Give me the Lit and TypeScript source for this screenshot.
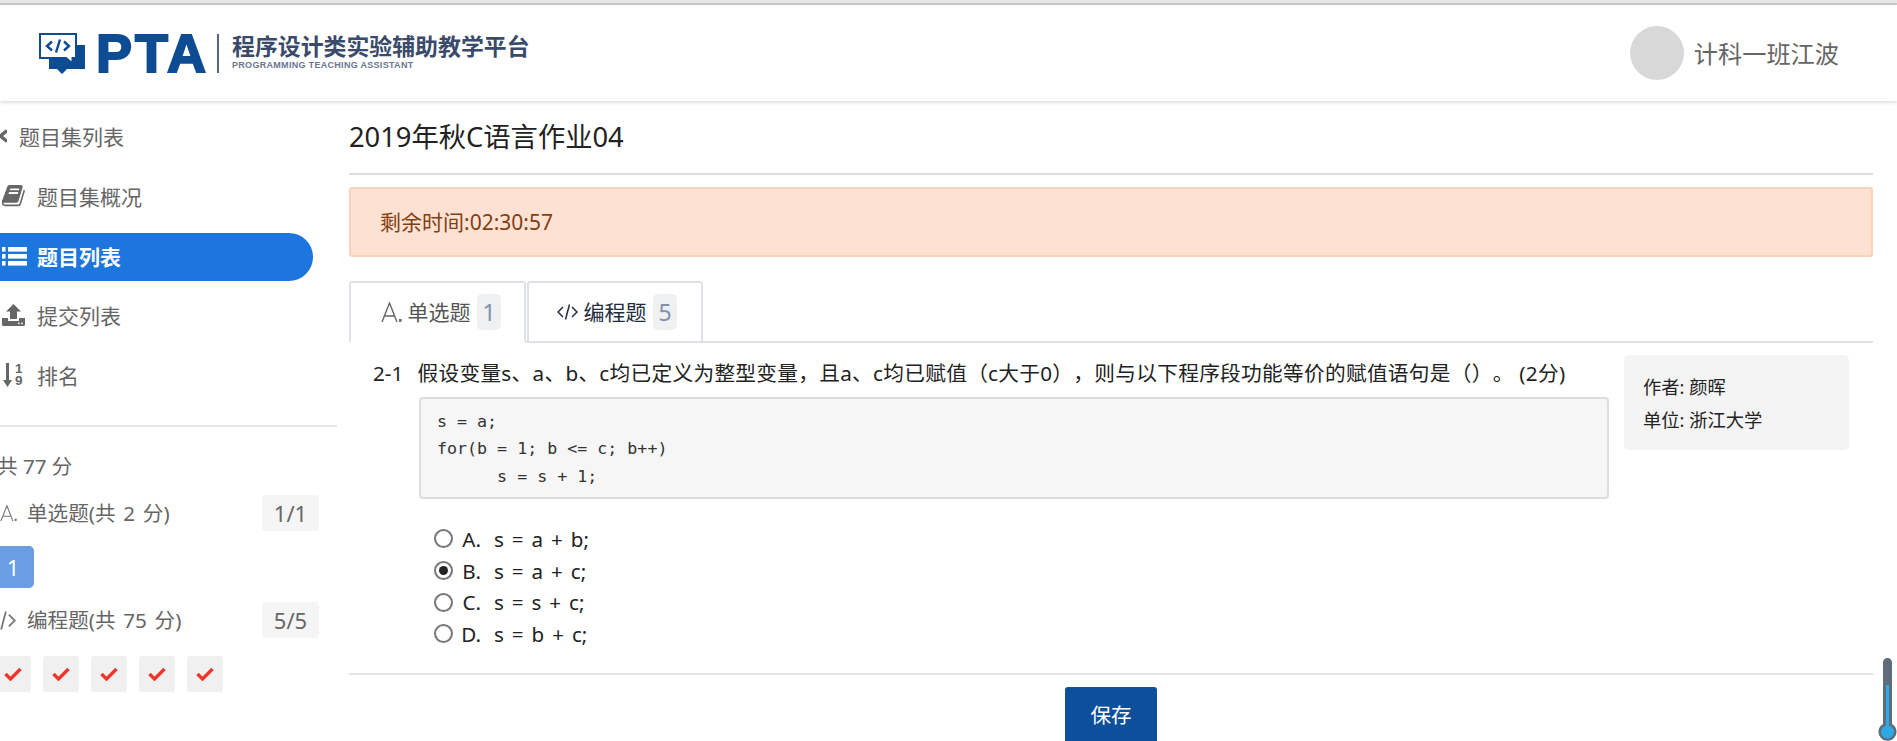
import { LitElement, html, css, svg } from "lit";
import { customElement } from "lit/decorators.js";

const bookPath = "M1703 478q40 57 18 129l-275 906q-19 64-76.5 107.5t-122.5 43.5h-923q-77 0-148.5-53.5t-99.5-131.5q-24-67-2-127 0-4 3-27t4-37q1-8-3-21.5t-3-19.5q2-11 8-21t16.5-23.5 16.5-23.5q23-38 45-91.5t30-91.5q3-10 .5-30t-.5-28q3-11 17-28t17-23q21-36 42-92t25-90q1-9-2.5-32t.5-28q4-13 22-30.5t22-22.5q19-26 42.5-84.5t27.5-96.5q1-8-3-25.5t-2-26.5q2-8 9-18t18-23 17-21q8-12 16.5-30.5t15-35 16-36 19.5-32 26.5-23.5 36-11.5 47.5 5.5l-1 3q38-9 51-9h761q74 0 114 56t18 130l-274 906q-36 119-71.5 153.5t-128.5 34.5h-869q-27 0-38 15-11 16-1 43 24 70 144 70h923q29 0 56-15.5t35-41.5l300-987q7-22 5-57 38 15 59 43zm-1064 2q-4 13 2 22.5t20 9.5h608q13 0 25.5-9.5t16.5-22.5l21-64q4-13-2-22.5t-20-9.5h-608q-13 0-25.5 9.5t-16.5 22.5zm-83 256q-4 13 2 22.5t20 9.5h608q13 0 25.5-9.5t16.5-22.5l21-64q4-13-2-22.5t-20-9.5h-608q-13 0-25.5 9.5t-16.5 22.5z";

const iconA = (c: string) => html`<svg width="21" height="20" viewBox="0 0 21 20"><path d="M1 20 L8.5 1 L16 20 M3.6 14 H13.4" fill="none" stroke=${c} stroke-width="1.4"/><rect x="18" y="17" width="2.6" height="2.8" fill=${c}/></svg>`;
const iconCode = (c: string) => html`<svg width="21" height="16" viewBox="0 0 21 16"><path d="M6 3 L1 8 L6 13 M15 3 L20 8 L15 13 M12.5 0.5 L8.5 15.5" fill="none" stroke=${c} stroke-width="1.5"/></svg>`;
const check = html`<svg width="18" height="14" viewBox="0 0 18 14"><path d="M1.5 7 L6.5 12 L16.5 2" fill="none" stroke="#f5332d" stroke-width="3.4"/></svg>`;

@customElement("app-root")
export class AppRoot extends LitElement {
  static styles = css`
    :host { display: block; width: 1897px; height: 741px; overflow: hidden; position: relative; background: #fff;
      font-family: "Noto Sans", "Noto Sans CJK SC", sans-serif; font-size: 20.6px; color: #222; text-spacing-trim: space-all; }
    .topband { height: 3px; background: #e8e8e8; border-bottom: 2px solid #ccc; }
    header { height: 96px; display: flex; align-items: center; justify-content: space-between; box-sizing: border-box;
      padding: 0 58px 0 39px; box-shadow: 0 1px 4px rgba(0,0,0,.18); position: relative; }
    .logo { display: flex; align-items: center; }
    .pta { font-family: "Liberation Sans", sans-serif; font-weight: 700; font-size: 54px; line-height: 40px; color: #0d4b92;
      margin-left: 11px; letter-spacing: 3px; -webkit-text-stroke: 2px #0d4b92; }
    .sep { width: 2px; height: 39px; background: #56657f; margin: 0 13px 0 8px; }
    .slogan { display: flex; flex-direction: column; margin-top: -2px; }
    .cn { font-size: 22.9px; font-weight: 700; line-height: 26px; color: #3a4a6b; white-space: nowrap; }
    .en { font-family: "Liberation Sans", sans-serif; font-size: 9px; font-weight: 700; line-height: 11px; color: #6a7690; letter-spacing: .3px; white-space: nowrap; }
    .user { display: flex; align-items: center; gap: 10px; color: #666; font-size: 24.2px; }
    .user .nm { padding-bottom: 2px; }
    .avatar { width: 54px; height: 54px; border-radius: 50%; background: #d8d8d8; }
    .body { display: flex; }
    aside { width: 337px; flex: none; overflow: hidden; padding-top: 12px; color: #666; }
    nav { display: flex; flex-direction: column; gap: 11.75px; }
    .item { height: 48px; box-sizing: border-box; padding-bottom: 2px; display: flex; align-items: center; font-size: 21px; }
    .item .ic { width: 37px; flex: none; display: flex; padding-left: 2px; box-sizing: border-box; }
    .item.back .ic { width: 19px; padding-left: 0; margin-left: -1px; margin-right: 1px; }
    .item.active { width: 313px; background: #1d75de; color: #fff; font-weight: 700; border-radius: 0 24px 24px 0; padding-bottom: 1px; }
    .sort { display: flex; gap: 3px; align-items: center; padding-left: 1px; }
    .digits { font-family: "Liberation Sans", sans-serif; font-size: 13.5px; font-weight: 700; display: flex; flex-direction: column; }
    .digits span { display: block; height: 12.5px; line-height: 12.5px; }
    .div1 { height: 2px; background: #e6e6e6; margin-top: 25px; }
    .total { margin: 24px 0 0 -3px; line-height: 30px; white-space: nowrap; }
    .grp { display: flex; align-items: center; height: 36px; margin-top: 14px; padding-right: 18px; }
    .grp .gi { width: 27px; flex: none; display: flex; overflow: hidden; justify-content: flex-end; padding-right: 10px; box-sizing: border-box; }
    .grp .gi.cd { padding-right: 11px; }
    .grp .gi.cd svg { width: 25px; height: 19px; flex: none; }
    .grp .lbl { flex: 1; white-space: nowrap; word-spacing: 2.4px; padding-bottom: 3px; }
    .count { width: 57px; height: 36px; background: #f5f5f5; border-radius: 3px; display: flex; align-items: center; justify-content: center; font-size: 22px; padding-bottom: 1px; box-sizing: border-box; }
    .one { width: 42px; height: 42px; margin: 15px 0 0 -8px; background: #699ee3; border-radius: 5px; color: #fff; display: flex; align-items: center; justify-content: center; font-size: 22px; }
    .checks { display: flex; gap: 12px; margin: 18px 0 0 -5px; }
    .chk { width: 36px; height: 36px; background: #f0f0f0; border-radius: 3px; display: flex; align-items: center; justify-content: center; }
    main { width: 1524px; flex: none; margin-left: 12px; padding-top: 13px; position: relative; }
    h1 { margin: 0; height: 48px; line-height: 46px; font-size: 27.3px; font-weight: 400; color: #222; white-space: nowrap; }
    .div2 { height: 2px; background: #ddd; margin-top: 11px; }
    .alert { height: 70px; margin-top: 12px; box-sizing: border-box; background: #fde2d3; border: 2px solid #fbd3bd; border-radius: 3px;
      display: flex; align-items: center; padding: 0 0 3px 29px; color: #843e12; font-size: 21px; }
    .tabs { display: flex; height: 60px; margin-top: 24px; border-bottom: 2px solid #dee2e6; gap: 1px; }
    .tab { box-sizing: border-box; width: 176px; height: 62px; border: 2px solid #dee2e6; border-radius: 3px 3px 0 0; display: flex; align-items: center; padding-left: 27.5px; color: #1f2d3d; background: #fff; }
    .tab.cur { border-bottom-color: #fff; color: #555; width: 177px; padding-left: 29.5px; }
    .tab .t { margin: 0 6.5px 3px 6px; font-size: 21px; }
    .tab .n { width: 24px; height: 36px; border-radius: 5px; background: #eff0f2; color: #8290aa; display: flex; align-items: center; justify-content: center; font-size: 23px; }
    .qwrap { display: flex; padding-left: 25px; padding-top: 15px; }
    .qnum { width: 45px; flex: none; line-height: 30px; white-space: nowrap; margin-left: -1px; padding-right: 1px; }
    .qbody { width: 1190px; flex: none; }
    .qtext { line-height: 30px; white-space: nowrap; margin-left: -1.5px; font-size: 20.7px; letter-spacing: .28px; }
    pre { margin: 9px 0 0; box-sizing: border-box; height: 102px; background: #f6f6f6; border: 2px solid #ddd; border-radius: 4px; padding: 9px 16px 0;
      font-family: "DejaVu Sans Mono", monospace; font-size: 16.65px; line-height: 27.3px; color: #333; }
    .opts { margin-top: 24px; padding-left: 15px; }
    .opt { height: 31.7px; display: flex; align-items: center; }
    .radio { width: 19px; height: 19px; box-sizing: border-box; border: 2px solid #777; border-radius: 50%; display: flex; align-items: center; justify-content: center; flex: none; }
    .radio.on::after { content: ""; width: 9px; height: 9px; border-radius: 50%; background: #222; }
    .letter { width: 28px; text-align: right; flex: none; margin-right: 13px; }
    .code { white-space: pre; word-spacing: 2.6px; }
    .info { width: 225px; height: 95px; flex: none; box-sizing: border-box; margin: -3px 0 0 15px; background: #f4f4f4; border-radius: 5px; padding: 15px 19px; font-size: 18.3px; line-height: 33px; white-space: nowrap; }
    .div3 { height: 2px; background: #e5e5e5; margin-top: 23px; }
    .savewrap { display: flex; justify-content: center; margin-top: 12px; }
    .save { width: 92px; height: 60px; background: #0d4f9a; color: #fff; border-radius: 3px; display: flex; align-items: flex-start; justify-content: center; padding-top: 12px; box-sizing: border-box; }
    .thermo { position: absolute; left: 1878px; top: 655px; }
  `;

  renderItem(label: string, icon: unknown, cls = "") {
    return html`<div class="item ${cls}"><span class="ic">${icon}</span><span>${label}</span></div>`;
  }

  render() {
    const chevron = html`<svg width="8" height="14" viewBox="0 0 8 14"><path d="M8 1.5 L1.5 7 L8 12.5" fill="none" stroke="#666" stroke-width="3.4"/></svg>`;
    const book = html`<svg width="23" height="22" viewBox="80 190 1660 1460"><path fill="#666" d=${bookPath}/></svg>`;
    const list = html`<svg width="25" height="19" viewBox="0 0 25 19" fill="#fff"><rect x="0" y="0" width="3.5" height="4.6"/><rect x="6" y="0" width="19" height="4.6"/><rect x="0" y="7" width="3.5" height="4.6"/><rect x="6" y="7" width="19" height="4.6"/><rect x="0" y="14" width="3.5" height="4.6"/><rect x="6" y="14" width="19" height="4.6"/></svg>`;
    const upload = html`<svg width="23" height="22" viewBox="0 0 23 22"><path fill="#666" d="M11.5 0 L19 7.5 H15 V15 H8 V7.5 H4 Z"/><path fill="#666" d="M0 14 H6 V17 H17 V14 H23 V20.5 A1.5 1.5 0 0 1 21.5 22 H1.5 A1.5 1.5 0 0 1 0 20.5 Z"/><rect x="16" y="18.6" width="1.6" height="1.6" fill="#fff"/><rect x="19.2" y="18.6" width="1.6" height="1.6" fill="#fff"/></svg>`;
    const sort = html`<span class="sort"><svg width="9" height="24" viewBox="0 0 9 24"><path fill="#666" d="M3 0 H6 V17 H9 L4.5 24 L0 17 H3 Z"/></svg><span class="digits"><span>1</span><span>9</span></span></span>`;
    return html`
      <div class="topband"></div>
      <header>
        <div class="logo">
          <svg width="46" height="41" viewBox="0 0 46 41">
            ${svg`<path fill="#0d4b92" d="M33 12 H46 V36 H28 L23 41 L18 36 H10 V24 H33 Z"/>
            <path d="M1 1 H37 V25 H33.5 V30.5 L27 25 H1 Z" fill="#fff" stroke="#0d4b92" stroke-width="2"/>
            <path d="M13 8.5 L8 13 L13 17.5 M25 8.5 L30 13 L25 17.5 M21 6.5 L17 19.5" fill="none" stroke="#0d4b92" stroke-width="2.4"/>`}
          </svg>
          <span class="pta">PTA</span>
          <span class="sep"></span>
          <div class="slogan">
            <span class="cn">程序设计类实验辅助教学平台</span>
            <span class="en">PROGRAMMING TEACHING ASSISTANT</span>
          </div>
        </div>
        <div class="user"><span class="avatar"></span><span class="nm">计科一班江波</span></div>
      </header>
      <div class="body">
        <aside>
          <nav>
            ${this.renderItem("题目集列表", chevron, "back")}
            ${this.renderItem("题目集概况", book)}
            ${this.renderItem("题目列表", list, "active")}
            ${this.renderItem("提交列表", upload)}
            ${this.renderItem("排名", sort)}
          </nav>
          <div class="div1"></div>
          <div class="total">共 77 分</div>
          <div class="grp"><span class="gi">${iconA("#777")}</span><span class="lbl">单选题(共 2 分)</span><span class="count">1/1</span></div>
          <div class="one">1</div>
          <div class="grp"><span class="gi cd">${iconCode("#777")}</span><span class="lbl">编程题(共 75 分)</span><span class="count">5/5</span></div>
          <div class="checks">${[1, 2, 3, 4, 5].map(() => html`<span class="chk">${check}</span>`)}</div>
        </aside>
        <main>
          <h1>2019年秋C语言作业04</h1>
          <div class="div2"></div>
          <div class="alert">剩余时间:02:30:57</div>
          <div class="tabs">
            <div class="tab cur">${iconA("#666")}<span class="t">单选题</span><span class="n">1</span></div>
            <div class="tab">${iconCode("#1f2d3d")}<span class="t">编程题</span><span class="n">5</span></div>
          </div>
          <div class="qwrap">
            <div class="qnum">2-1</div>
            <div class="qbody">
              <div class="qtext">假设变量s、a、b、c均已定义为整型变量，且a、c均已赋值（c大于0），则与以下程序段功能等价的赋值语句是（）。 (2分)</div>
              <pre>s = a;
for(b = 1; b &lt;= c; b++)
      s = s + 1;</pre>
              <div class="opts">
                ${[["A.", "s = a + b;"], ["B.", "s = a + c;"], ["C.", "s = s + c;"], ["D.", "s = b + c;"]].map(([l, c], i) => html`
                  <div class="opt"><span class="radio ${i === 1 ? "on" : ""}"></span><span class="letter">${l}</span><span class="code">${c}</span></div>`)}
              </div>
            </div>
            <div class="info"><div>作者: 颜晖</div><div>单位: 浙江大学</div></div>
          </div>
          <div class="div3"></div>
          <div class="savewrap"><div class="save">保存</div></div>
        </main>
      </div>
      <svg class="thermo" width="19" height="86" viewBox="0 0 19 86">
        ${svg`<path d="M5 7.5 a4.5 4.5 0 0 1 9 0 V69 a9 9 0 1 1 -9 0 Z" fill="#5f6c7a"/>
        <rect x="8" y="30" width="3" height="42" fill="#2fa9e6"/>
        <circle cx="9.5" cy="77" r="6.5" fill="#2fa9e6"/>`}
      </svg>
    `;
  }
}
